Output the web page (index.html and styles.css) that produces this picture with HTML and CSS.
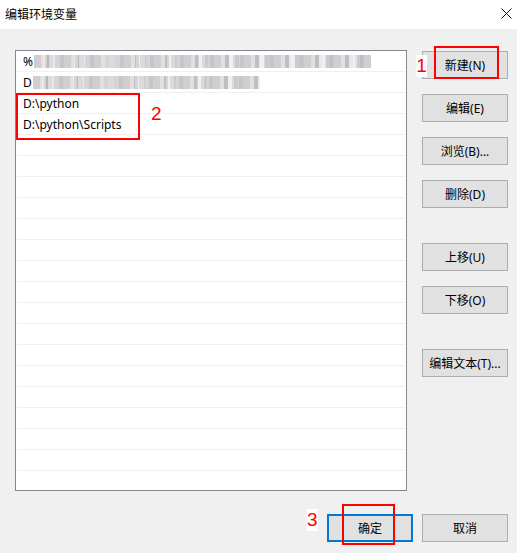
FILE: index.html
```html
<!DOCTYPE html>
<html lang="zh-CN">
<head>
  <meta charset="UTF-8" />
  <title>编辑环境变量</title>
  <link rel="stylesheet" href="styles.css">
</head>
<body>
  <div class="dialog">
    <div class="titlebar">
      <span class="title">编辑环境变量</span>
      <svg class="close" width="11" height="11" viewBox="0 0 11 11">
        <path d="M0.5 0.5 L10.5 10.5 M10.5 0.5 L0.5 10.5" stroke="#111" stroke-width="1" fill="none"/>
      </svg>
    </div>

    <div class="content">
      <div class="path-list" id="pathList">
        <div class="row"><span>%</span><span class="mosaic m1"></span></div>
        <div class="row"><span>D</span><span class="mosaic m2"></span></div>
        <div class="row">D:\python</div>
        <div class="row">D:\python\Scripts</div>
      </div>

      <div class="side-buttons">
        <button class="btn">新建(N)</button>
        <button class="btn">编辑(E)</button>
        <button class="btn">浏览(B)...</button>
        <button class="btn">删除(D)</button>
        <button class="btn gap-top">上移(U)</button>
        <button class="btn">下移(O)</button>
        <button class="btn gap-top">编辑文本(T)...</button>
      </div>
    </div>

    <div class="footer">
      <button class="btn default">确定</button>
      <button class="btn">取消</button>
    </div>

    <!-- annotations -->
    <div class="mark box-1"></div>
    <div class="num num-1">1</div>
    <div class="mark box-2"></div>
    <div class="num num-2">2</div>
    <div class="mark box-3"></div>
    <div class="num num-3">3</div>
  </div>

  <script>
    // fill the rest of the list with empty rows
    const list = document.getElementById('pathList');
    for (let i = list.children.length; i < 21; i++) {
      const row = document.createElement('div');
      row.className = 'row';
      list.appendChild(row);
    }
  </script>
</body>
</html>
```

FILE: styles.css
```css
* {
  margin: 0;
  padding: 0;
  box-sizing: border-box;
}

body {
  font-family: "Noto Sans", "Noto Sans CJK SC", sans-serif;
  font-size: 12px;
  color: #000;
  background: #f0f0f0;
}

.dialog {
  position: relative;
  width: 517px;
  height: 553px;
  background: #f0f0f0;
}

.titlebar {
  height: 29px;
  background: #fff;
  display: flex;
  align-items: center;
  justify-content: space-between;
  padding: 0 5px 0 5px;
}

.title {
  font-size: 12px;
  margin-top: -2px;
}

.close {
  margin-top: -2px;
}

.content {
  display: flex;
  gap: 15px;
  padding: 21px 9px 0 15px;
}

.path-list {
  width: 392px;
  height: 441px;
  background: #fff;
  border: 1px solid #828790;
  overflow: hidden;
}

.row {
  height: 21px;
  margin: 0 1px;
  padding-left: 6px;
  border-bottom: 1px solid #f0f0f0;
  display: flex;
  align-items: center;
  white-space: nowrap;
}

/* blurred-out path text */
.mosaic {
  height: 13px;
  margin-left: 1px;
  background:
    repeating-linear-gradient(90deg, rgba(255,255,255,0) 0 9px, rgba(255,255,255,0.35) 9px 13px, rgba(120,120,125,0.15) 13px 19px, rgba(255,255,255,0) 19px 31px),
    repeating-linear-gradient(90deg, #c9c6c8 0 7px, #dcdadb 7px 11px, #b5b3b6 11px 15px, #e6e4e5 15px 21px, #cfcdd0 21px 26px, #bdbcc0 26px 30px),
    #d8d6d8;
  opacity: 0.85;
}

.m1 {
  width: 337px;
}

.m2 {
  width: 227px;
}

.side-buttons {
  display: flex;
  flex-direction: column;
  gap: 15px;
  padding-top: 1px;
}

.btn {
  width: 86px;
  height: 28px;
  background: #e1e1e1;
  border: 1px solid #adadad;
  font-family: "Noto Sans", "Noto Sans CJK SC", sans-serif;
  font-size: 12px;
  color: #000;
}

.gap-top {
  margin-top: 20px;
}

.footer {
  display: flex;
  justify-content: flex-end;
  gap: 9px;
  padding: 23px 9px 0 0;
}

.btn.default {
  border: 2px solid #0078d7;
}

/* red annotation boxes */
.mark {
  position: absolute;
  border: 2px solid #f00;
}

.box-1 {
  left: 434px;
  top: 46px;
  width: 65px;
  height: 33px;
}

.box-2 {
  left: 16px;
  top: 93px;
  width: 124px;
  height: 47px;
}

.box-3 {
  left: 342px;
  top: 504px;
  width: 53px;
  height: 41px;
}

.num {
  position: absolute;
  color: #f00;
  font-family: "Liberation Sans", sans-serif;
  font-size: 19px;
  line-height: 22px;
}

.num-1 {
  left: 416px;
  top: 55px;
  width: 11px;
  background: #fff;
  text-align: center;
}

.num-2 {
  left: 151px;
  top: 103px;
}

.num-3 {
  left: 307px;
  top: 509px;
  background: #fff;
}
```
